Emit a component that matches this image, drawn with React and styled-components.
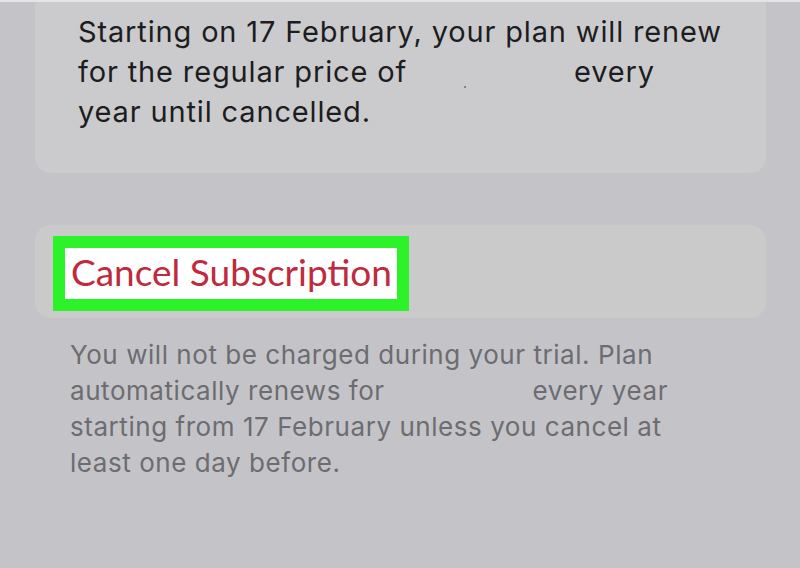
import React from "react";
import styled, { createGlobalStyle } from "styled-components";

const Global = createGlobalStyle`
  html, body {
    margin: 0;
    padding: 0;
    background: #c4c4c8;
  }
  body {
    width: 800px;
    height: 568px;
    overflow: hidden;
    border-top: 2px solid #e4e4e6;
    box-sizing: border-box;
  }
`;

const Screen = styled.div`
  display: flex;
  flex-direction: column;
  padding: 0 34px 0 35px;
  margin-top: -2px;
`;

const InfoCard = styled.div`
  background: #cbcbcd;
  border-radius: 0 0 16px 16px;
  padding: 12px 20px 41px 43px;
`;

const Body = styled.p`
  margin: 0;
  font-family: Inter, "Liberation Sans", sans-serif;
  font-size: 29px;
  letter-spacing: 0.85px;
  line-height: 40px;
  color: #1d1d1f;
  white-space: nowrap;
`;

const Blank = styled.span`
  display: inline-block;
  width: ${(p) => p.$w}px;
  position: relative;
`;

const Speck = styled.i`
  position: absolute;
  left: ${(p) => p.$x}px;
  top: 4px;
  width: 2px;
  height: 2px;
  border-radius: 50%;
  background: #6b6b70;
`;

const ActionCard = styled.div`
  margin-top: 52px;
  background: #cacaca;
  border-radius: 16px;
  height: 93px;
  box-sizing: border-box;
  padding: 11px 17px 7px 18px;
  display: flex;
  align-items: flex-start;
`;

const Highlight = styled.div`
  border: 12px solid #2cf22a;
  background: #ffffff;
  height: 51px;
  box-sizing: content-box;
  padding: 0 5px 0 6px;
  display: flex;
  align-items: center;
`;

const DangerLabel = styled.span`
  font-family: Lato, "Liberation Sans", sans-serif;
  font-size: 37px;
  line-height: 1;
  color: #bf2a3c;
  margin-bottom: 5px;
`;

const Footnote = styled.p`
  margin: 19px 0 0 35px;
  font-family: Inter, "Liberation Sans", sans-serif;
  font-size: 26px;
  letter-spacing: 0.55px;
  line-height: 36px;
  color: #6c6c71;
  white-space: nowrap;
`;

export default function App() {
  return (
    <>
      <Global />
      <Screen>
        <InfoCard>
          <Body>
            Starting on 17 February, your plan will renew
            <br />
            for the regular price of <Blank $w={158}><Speck $x={48} /></Blank>every
            <br />
            year until cancelled.
          </Body>
        </InfoCard>
        <ActionCard>
          <Highlight>
            <DangerLabel>Cancel Subscription</DangerLabel>
          </Highlight>
        </ActionCard>
        <Footnote>
          You will not be charged during your trial. Plan
          <br />
          automatically renews for <Blank $w={140} />every year
          <br />
          starting from 17 February unless you cancel at
          <br />
          least one day before.
        </Footnote>
      </Screen>
    </>
  );
}
